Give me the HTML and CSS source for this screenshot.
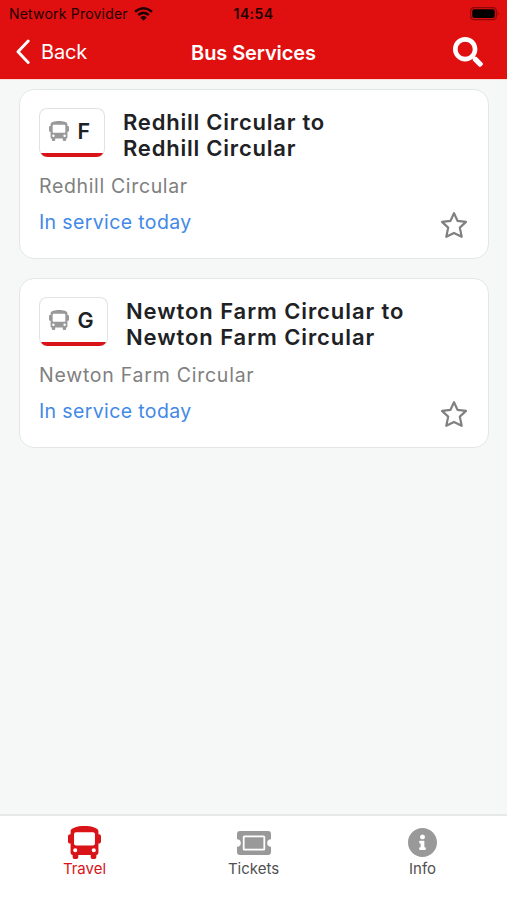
FILE: index.html
```html
<!DOCTYPE html>
<html lang="en">
<head>
<meta charset="utf-8">
<meta name="viewport" content="width=device-width, initial-scale=1">
<title>Bus Services</title>
<link rel="stylesheet" href="styles.css">
</head>
<body>
<svg class="defs" width="0" height="0" aria-hidden="true">
  <symbol id="bus" viewBox="0 0 512 512">
    <path fill-rule="evenodd" d="M256 0C370 0 472 32 472 80v48h8c18 0 32 14 32 32v80c0 18-14 32-32 32h-8v144c0 18-14 32-32 32v32c0 18-14 32-32 32h-24c-18 0-32-14-32-32v-32H160v32c0 18-14 32-32 32h-24c-18 0-32-14-32-32v-32c-18 0-32-14-32-32V272H32c-18 0-32-14-32-32v-80c0-18 14-32 32-32h8V80C40 32 142 0 256 0zM124 96q-30 0-30 30v146q0 30 30 30h264q30 0 30-30V126q0-30-30-30zM112 344a32 32 0 1 0 0 64 32 32 0 0 0 0-64zm288 0a32 32 0 1 0 0 64 32 32 0 0 0 0-64z"/>
  </symbol>
  <symbol id="star" viewBox="0 0 28 28">
    <path d="M14 2.2 17.5 9.8 26 10.9 19.8 16.6 21.7 25.8 14 21.9 6.3 25.8 8.2 16.6 2 10.9 10.5 9.8Z" fill="none" stroke="currentColor" stroke-width="2.2" stroke-linejoin="round"/>
  </symbol>
</svg>
<div class="app">
  <header class="header">
    <div class="status">
      <div class="carrier"><span class="carrier-name">Network Provider</span>
        <svg class="wifi" viewBox="0 0 19 14"><path d="M1 4.8Q9.5-2.3 18 4.8M4.2 8Q9.5 3.7 14.8 8" fill="none" stroke="currentColor" stroke-width="2.5"/><path d="M6.2 10.4Q9.5 7.8 12.8 10.4L9.5 13.7Z"/></svg>
      </div>
      <span class="time">14:54</span>
      <svg class="battery" viewBox="0 0 30 14"><rect x=".7" y=".7" width="25.6" height="12" rx="3.5" fill="none" stroke="#8d0808" stroke-width="1.2"/><rect x="2.3" y="2.3" width="22.4" height="8.8" rx="2"/><path d="M27.7 4.5q2 2.2 0 4.4z" fill="#8d0808"/></svg>
    </div>
    <nav class="navbar">
      <a class="back"><svg viewBox="0 0 16 26"><path d="M13.2 2 3 12.7 13.2 23.4" fill="none" stroke="currentColor" stroke-width="2.9" stroke-linecap="round" stroke-linejoin="round"/></svg><span>Back</span></a>
      <h1>Bus Services</h1>
      <svg class="search" viewBox="0 0 512 512"><path d="M505 442.7L405.3 343c-4.5-4.5-10.6-7-17-7H372c27.6-35.3 44-79.7 44-128C416 93.1 322.9 0 208 0S0 93.1 0 208s93.1 208 208 208c48.3 0 92.7-16.4 128-44v16.3c0 6.4 2.5 12.5 7 17l99.7 99.7c9.4 9.4 24.6 9.4 33.9 0l28.3-28.3c9.4-9.4 9.4-24.6.1-34zM208 336c-70.7 0-128-57.2-128-128 0-70.7 57.2-128 128-128 70.7 0 128 57.2 128 128 0 70.7-57.2 128-128 128z"/></svg>
    </nav>
  </header>
  <main class="services">
    <article class="card">
      <div class="card-head">
        <div class="badge"><svg><use href="#bus"/></svg><span>F</span></div>
        <h2>Redhill Circular to<br>Redhill Circular</h2>
      </div>
      <p class="route">Redhill Circular</p>
      <div class="card-foot"><span class="running">In service today</span><svg class="star"><use href="#star"/></svg></div>
    </article>
    <article class="card">
      <div class="card-head">
        <div class="badge wide"><svg><use href="#bus"/></svg><span>G</span></div>
        <h2 class="long">Newton Farm Circular to<br>Newton Farm Circular</h2>
      </div>
      <p class="route long">Newton Farm Circular</p>
      <div class="card-foot"><span class="running">In service today</span><svg class="star"><use href="#star"/></svg></div>
    </article>
  </main>
  <nav class="tabs">
    <a class="tab active"><svg class="tab-bus"><use href="#bus"/></svg><span>Travel</span></a>
    <a class="tab"><svg class="tab-ticket" viewBox="0 0 34 24"><path fill-rule="evenodd" d="M3 0H31Q34 0 34 3V8.2A3.8 3.8 0 0 0 34 15.8V21Q34 24 31 24H3Q0 24 0 21V15.8A3.8 3.8 0 0 0 0 8.2V3Q0 0 3 0ZM7.3 4.5Q5.8 4.5 5.8 6V18Q5.8 19.5 7.3 19.5H26.7Q28.2 19.5 28.2 18V6Q28.2 4.5 26.7 4.5Z"/><rect x="7.6" y="6.3" width="18.8" height="11.4"/></svg><span>Tickets</span></a>
    <a class="tab"><svg class="tab-info" viewBox="8 8 496 496"><path d="M256 8C119.043 8 8 119.083 8 256c0 136.997 111.043 248 248 248s248-111.003 248-248C504 119.083 392.957 8 256 8zm0 110c23.196 0 42 18.804 42 42s-18.804 42-42 42-42-18.804-42-42 18.804-42 42-42zm56 254c0 6.627-5.373 12-12 12h-88c-6.627 0-12-5.373-12-12v-24c0-6.627 5.373-12 12-12h12v-64h-12c-6.627 0-12-5.373-12-12v-24c0-6.627 5.373-12 12-12h64c6.627 0 12 5.373 12 12v100h12c6.627 0 12 5.373 12 12v24z"/></svg><span>Info</span></a>
  </nav>
</div>
</body>
</html>
```
FILE: styles.css
```css
* { box-sizing: border-box; }
body { margin: 0; font-family: Inter, "Liberation Sans", sans-serif; color: #202124; }
svg { display: block; fill: currentColor; flex: none; }
h1, h2, p { margin: 0; }
.defs { position: absolute; }
.app { height: 900px; display: flex; flex-direction: column; background: #f5f8f7; overflow: hidden; }

.header { height: 79px; flex: none; background: #e01010; color: #fff; box-shadow: 0 1px 0 #fbdcd8; }
.status { height: 27px; padding: 0 7px 0 9px; display: grid; grid-template-columns: 1fr auto 1fr; align-items: center; color: #240000; }
.carrier { display: flex; align-items: center; gap: 6px; font-size: 14px; }
.carrier-name { letter-spacing: .2px; white-space: nowrap; }
.wifi { width: 19px; height: 14px; }
.time { font-size: 14px; font-weight: 600; letter-spacing: .4px; margin: 0 1px 0 -1px; }
.battery { width: 30px; height: 14px; justify-self: end; color: #000; }
.navbar { height: 50px; padding: 0 24px; display: grid; grid-template-columns: 1fr auto 1fr; align-items: center; }
.back { display: flex; align-items: center; gap: 10px; margin-left: -9px; font-size: 20px; letter-spacing: -.2px; }
.back svg { width: 16px; height: 26px; }
.navbar h1 { font-size: 20px; font-weight: 600; letter-spacing: -.1px; padding-top: 1px; }
.search { width: 30px; height: 30px; justify-self: end; }

.services { flex: 1; padding: 9.5px 18px 0 19px; display: flex; flex-direction: column; gap: 19px; }
.card { height: 170px; padding: 18px 20px 0 19px; background: #fff; border: 1.5px solid #e3e7e6; border-radius: 15px; }
.card-head { height: 56px; display: flex; align-items: flex-start; gap: 18px; }
.badge { width: 66px; height: 49px; padding: 0 0 4px 9px; display: flex; align-items: center; gap: 8.5px; border: 1.5px solid #e2e2e2; border-bottom: 0; border-radius: 8px; background: linear-gradient(#d91418, #d91418) bottom / 100% 4px no-repeat; font-size: 21.5px; font-weight: 600; }
.badge.wide { width: 69px; }
.badge svg { width: 20px; height: 20px; color: #999; }
h2 { padding-top: 1px; font-size: 22px; line-height: 26.5px; font-weight: 600; letter-spacing: .78px; white-space: nowrap; }
h2.long { letter-spacing: .91px; }
.route { height: 44px; line-height: 44px; font-size: 19.5px; letter-spacing: .65px; color: #808080; }
.route.long { letter-spacing: .75px; }
.card-foot { height: 30px; display: flex; justify-content: space-between; align-items: flex-start; }
.running { color: #4389e8; font-size: 19.5px; line-height: 28px; letter-spacing: .37px; }
.star { width: 28px; height: 28px; margin-top: 3px; color: #808080; }

.tabs { height: 86px; flex: none; display: grid; grid-template-columns: repeat(3, 1fr); background: #fff; border-top: 2px solid #e5e9e8; }
.tab { display: grid; grid-template-rows: 33px 19px; justify-items: center; align-items: center; align-content: start; padding-top: 10px; color: #999; }
.tab span { color: #505050; font-size: 15px; line-height: 19px; }
.tab.active, .tab.active span { color: #d91418; }
.tab-bus { width: 33px; height: 33px; }
.tab-ticket { width: 34px; height: 24px; }
.tab-info { width: 29px; height: 29px; }
```
